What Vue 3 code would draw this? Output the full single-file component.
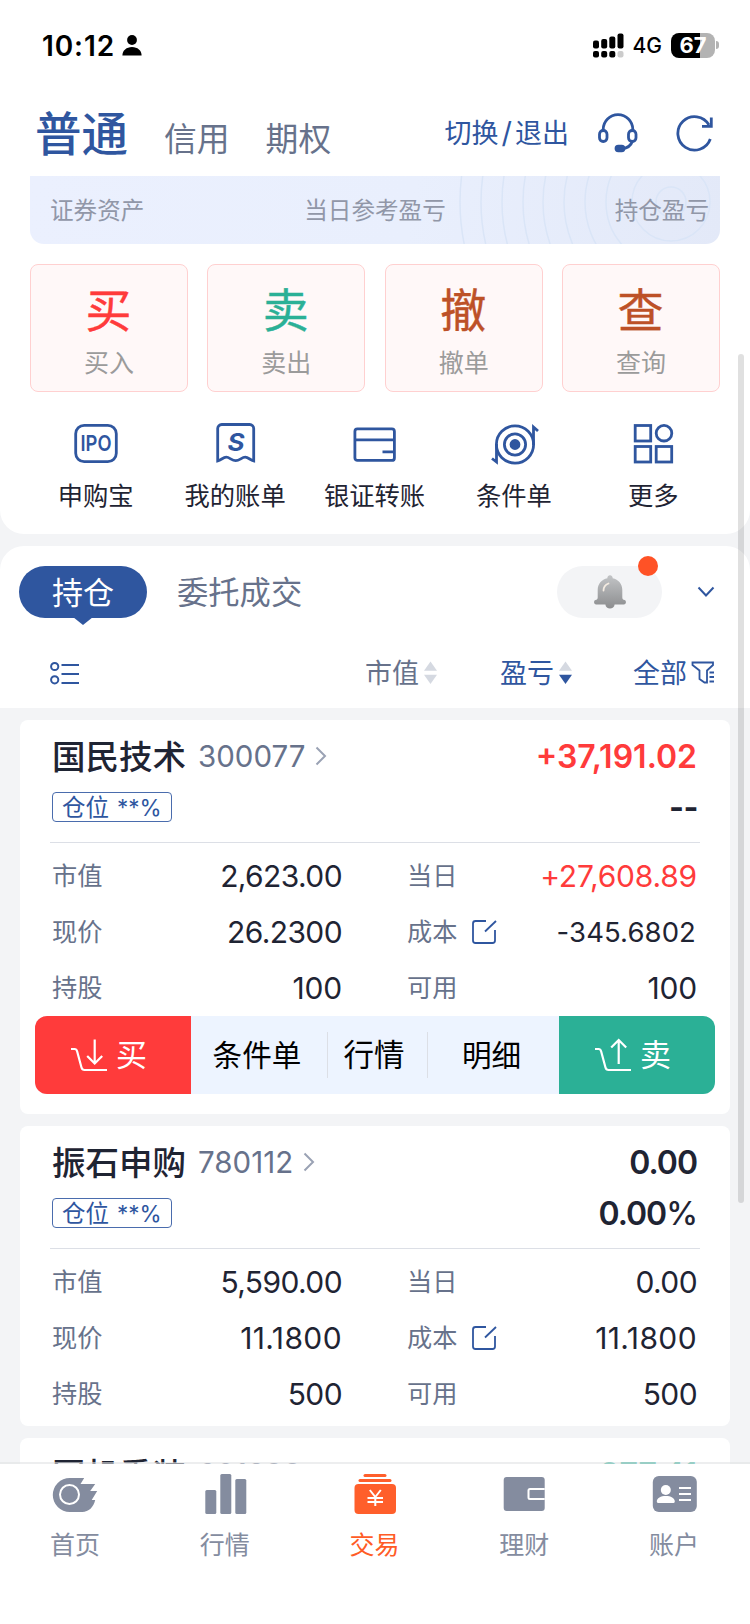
<!-- ./src/App.vue -->
<template>
    <div class="page">
        <!-- status bar -->
        <div class="status-bar">
            <div class="status-left">
                <span class="clock">10:12</span>
                <svg class="person" viewBox="0 0 20 21">
                    <circle cx="10" cy="5" r="4.9" />
                    <path d="M.4 20.500C.4 15.500 4.500 12 10 12s9.600 3.500 9.600 8.500z" />
                </svg>
            </div>
            <div class="status-right">
                <svg class="signal" viewBox="0 0 31 25">
                    <rect x="0" y="7.500" width="6" height="8" rx="2" />
                    <rect x="8.200" y="6" width="6" height="9.500" rx="2" />
                    <rect x="16.300" y="3.500" width="6" height="12" rx="2" />
                    <rect x="24.500" y=".5" width="6" height="15" rx="2" />
                    <rect x="0" y="18" width="6" height="6.500" rx="2" />
                    <rect x="8.200" y="18" width="6" height="6.500" rx="2" />
                    <rect x="16.300" y="18" width="6" height="6.500" rx="2" />
                    <rect x="24.500" y="18" width="6" height="6.500" rx="2" fill="#ccc" />
                </svg>
                <span class="network">4G</span>
                <div class="battery">67</div>
                <span class="battery-tip"></span>
            </div>
        </div>

        <!-- account type tabs -->
        <header class="header">
            <span class="account active">普通</span>
            <span class="account">信用</span>
            <span class="account">期权</span>
            <span class="switch">切换<i>/</i>退出</span>
            <svg class="headset" viewBox="0 0 40 40">
                <path d="M5.200 18V16.500a14.800 14.800 0 0 1 29.600 0V18" />
                <rect x="1.500" y="17.500" width="7.500" height="11" rx="3.700" />
                <rect x="30.500" y="17.500" width="7.500" height="11" rx="3.700" />
                <path d="M34.500 28c-1.500 4.500-5 7.500-11 7.700" />
                <rect x="18" y="33.200" width="8" height="4.600" rx="2.300" fill="#2f569f" />
            </svg>
            <svg class="refresh" viewBox="0 0 40 40">
                <path d="M35.300 26A16.700 16.700 0 1 1 34 12" />
                <path d="M36.300 4.500V13.300H27" />
            </svg>
        </header>

        <main class="content">
            <section class="panel top-panel">
                <div class="assets">
                    <svg class="rings" viewBox="0 0 290 68">
                        <circle v-for="r in rings" :key="r" cx="241" cy="26" :r="r" />
                    </svg>
                    <span>证券资产</span>
                    <span>当日参考盈亏</span>
                    <span>持仓盈亏</span>
                </div>
                <div class="trades">
                    <div v-for="item in trades" :key="item.label" class="trade">
                        <b :class="item.tone">{{ item.mark }}</b>
                        <span>{{ item.label }}</span>
                    </div>
                </div>
                <div class="tools">
                    <div class="tool">
                        <svg viewBox="0 0 44 44">
                            <rect x="1.700" y="4.300" width="40.600" height="36.400" rx="8.500" />
                            <text x="22" y="30" class="ipo" textLength="31" lengthAdjust="spacingAndGlyphs">IPO</text>
                        </svg>
                        <span>申购宝</span>
                    </div>
                    <div class="tool">
                        <svg viewBox="0 0 44 44">
                            <path d="M4.700 40V7.500a4 4 0 0 1 4-4h28a4 4 0 0 1 4 4V40c-3.500-1-5.500-3.800-8.500-3.800-3.500 0-5.500 3.500-9.500 3.500s-6-3.500-9.500-3.500c-3 0-5 2.800-8.500 3.800z" />
                            <text x="23" y="30" class="bill" textLength="17" lengthAdjust="spacingAndGlyphs">S</text>
                        </svg>
                        <span>我的账单</span>
                    </div>
                    <div class="tool">
                        <svg viewBox="0 0 44 44">
                            <rect x="2.900" y="7.900" width="39.500" height="31.500" rx="2.500" />
                            <path d="M3 18.800h39M30.500 30.800H42" />
                        </svg>
                        <span>银证转账</span>
                    </div>
                    <div class="tool">
                        <svg viewBox="0 0 50 44">
                            <circle cx="26" cy="23.500" r="18.600" />
                            <circle cx="26" cy="23.500" r="10.600" />
                            <circle cx="26" cy="23.500" r="4" fill="#2f569f" />
                            <path d="M44.500 24V6l4.500 4M7.500 23V41L3 37.500" />
                        </svg>
                        <span>条件单</span>
                    </div>
                    <div class="tool">
                        <svg viewBox="0 0 44 44">
                            <rect x="4.200" y="4.500" width="15.500" height="15.500" />
                            <circle cx="33" cy="12.200" r="7.800" />
                            <rect x="4.200" y="25.500" width="15.500" height="15.500" />
                            <rect x="25.200" y="25.500" width="15.500" height="15.500" />
                        </svg>
                        <span>更多</span>
                    </div>
                </div>
            </section>

            <section class="panel list-panel">
                <div class="tabs">
                    <span class="tab-active">持仓</span>
                    <span class="tab">委托成交</span>
                    <div class="notice">
                        <svg viewBox="0 0 32 34">
                            <defs>
                                <linearGradient id="bell" x1="0" y1="0" x2="0" y2="1">
                                    <stop offset="0" stop-color="#c2c4c6" />
                                    <stop offset="1" stop-color="#8c8d8f" />
                                </linearGradient>
                            </defs>
                            <path fill="url(#bell)" d="M16 .3a2.600 2.600 0 0 1 2.600 3C24.500 4.500 28.300 9 28.300 15v7.500c0 1.800.8 2.300 2.200 2.600 2.200.7 1.800 4.400-.7 4.400h-9.200c-.3 5.400-8.900 5.400-9.200 0H2.200c-2.500 0-2.900-3.700-.7-4.400 1.400-.3 2.200-.8 2.200-2.600V15c0-6 3.800-10.500 9.700-11.700a2.600 2.600 0 0 1 2.600-3z" />
                            <path d="M9.500 15.500c0-3.500 2-5.800 5-7" fill="none" stroke="#f4ece2" stroke-width="1.800" stroke-linecap="round" />
                        </svg>
                        <i class="dot"></i>
                    </div>
                    <svg class="fold" viewBox="0 0 18 12"><path d="M1.500 1.500L9 9.500l7.500-8" /></svg>
                </div>
                <div class="filters">
                    <svg class="list-icon" viewBox="0 0 30 24">
                        <circle cx="4.700" cy="5.500" r="3.600" />
                        <circle cx="4.700" cy="18.800" r="3.600" />
                        <path d="M11.500 4H29M11.500 13H29M11.500 22H29" />
                    </svg>
                    <span class="filter sort-value">市值
                        <svg viewBox="0 0 13 24"><path d="M6.500 .5L13 9.700H0z" /><path d="M0 13.800h13L6.500 23z" /></svg>
                    </span>
                    <span class="filter sort-profit blue">盈亏
                        <svg viewBox="0 0 13 24"><path d="M6.500 .5L13 9.700H0z" /><path class="on" d="M0 13.800h13L6.500 23z" /></svg>
                    </span>
                    <span class="filter blue">全部
                        <svg class="funnel" viewBox="0 0 24 24">
                            <path d="M1.500 1.500h20.500v2.500l-6 5.500V21.500h-2.500l-5-3.500V9.500L1.500 4z" />
                            <path d="M18.500 11.500H23M18.500 16H23M18.500 20.500H23" />
                        </svg>
                    </span>
                </div>
            </section>

            <!-- positions -->
            <article v-for="stock in stocks" :key="stock.code" class="card">
                <div class="card-title">
                    <span class="name">{{ stock.name }}</span>
                    <span class="code">{{ stock.code }}</span>
                    <svg class="arrow" viewBox="0 0 12 20"><path d="M1.500 1.500L10 10l-8.500 8.500" /></svg>
                    <span class="profit" :class="[stock.tone, { tight: !stock.tone }]">{{ stock.profit }}</span>
                </div>
                <div v-if="stock.rate" class="card-sub">
                    <span class="tag">仓位<em>**%</em></span>
                    <span class="rate" :class="stock.percent ? 'tight' : 'dashes'">{{ stock.rate }}<i v-if="stock.percent">%</i></span>
                </div>
                <div v-if="stock.cells.length" class="cells">
                    <div v-for="cell in stock.cells" :key="cell.label" class="cell">
                        <span class="cell-label">{{ cell.label }}</span>
                        <svg v-if="cell.label === '成本'" class="edit" viewBox="0 0 26 26">
                            <path d="M15 2H4.500A2.500 2.500 0 0 0 2 4.500v17A2.500 2.500 0 0 0 4.500 24h17a2.500 2.500 0 0 0 2.500-2.500V11" />
                            <path d="M14 12.500L25 2" />
                        </svg>
                        <span class="cell-value" :class="[cell.tone, cell.size]">{{ cell.value }}</span>
                    </div>
                </div>
                <div v-if="stock.open" class="actions">
                    <div class="side buy">
                        <svg viewBox="0 0 38 34">
                            <path d="M1 11h3.500c1.500 0 2.200.8 2.600 2.200L11.500 29.500c.5 1.800 1.200 2.500 3 2.500H37" />
                            <path d="M24.700 1.500V25M17.200 18l7.500 7.500L32.200 18" />
                        </svg>
                        <span>买</span>
                    </div>
                    <span class="action first">条件单</span>
                    <span class="action second">行情</span>
                    <span class="action third">明细</span>
                    <div class="side sell">
                        <svg viewBox="0 0 38 34">
                            <path d="M1 11h3.500c1.500 0 2.200.8 2.600 2.200L11.500 29.500c.5 1.800 1.200 2.500 3 2.500H37" />
                            <path d="M24.700 26V2M17.200 9.500l7.500-7.500L32.200 9.500" />
                        </svg>
                        <span>卖</span>
                    </div>
                </div>
            </article>
        </main>

        <!-- bottom navigation -->
        <nav class="nav">
            <div class="nav-item">
                <svg viewBox="0 0 46 44">
                    <path d="M17.800 6H32.200l-3.700 6H43.200l-5 7h7l-5.500 9H43.200c-1.500 7-6.500 12-13 12H17.800a17 17 0 0 1 0-34z" />
                    <circle cx="17.500" cy="22.500" r="9.500" fill="none" stroke="#fff" stroke-width="2" />
                </svg>
                <span>首页</span>
            </div>
            <div class="nav-item">
                <svg viewBox="0 0 46 44">
                    <rect x="3.300" y="18" width="11" height="24" rx="1.500" />
                    <rect x="18.300" y="2" width="11" height="40" rx="1.500" />
                    <rect x="33.300" y="7" width="11" height="35" rx="1.500" />
                </svg>
                <span>行情</span>
            </div>
            <div class="nav-item current">
                <svg viewBox="0 0 46 44">
                    <rect x="12.500" y="2" width="23" height="3" rx="1.500" />
                    <rect x="7.500" y="7" width="33" height="3" rx="1.500" />
                    <rect x="3.500" y="12" width="41.500" height="30" rx="4" />
                    <path d="M18.800 18l5.500 7 5.500-7M16.500 26h15.500M16.500 30h15.500M24.300 25v9" fill="none" stroke="#fff" stroke-width="2" />
                </svg>
                <span>交易</span>
            </div>
            <div class="nav-item">
                <svg viewBox="0 0 46 44">
                    <rect x="2.700" y="5" width="41" height="34" rx="3" />
                    <path d="M43.700 17H29a1.500 1.500 0 0 0-1.500 1.500v7A1.500 1.500 0 0 0 29 27h14.700" fill="none" stroke="#fff" stroke-width="2" />
                </svg>
                <span>理财</span>
            </div>
            <div class="nav-item">
                <svg viewBox="0 0 46 44">
                    <rect x="1.800" y="4" width="44" height="36" rx="6" />
                    <circle cx="14.800" cy="18" r="5" fill="#fff" />
                    <path d="M5.800 29.500c0-3.500 4-5.500 9-5.500s9 2 9 5.500c0 1-1 1.500-2 1.500h-14c-1 0-2-.5-2-1.500z" fill="#fff" />
                    <path d="M28 16h12M28 22h12M28 28h12" stroke="#fff" stroke-width="2" />
                </svg>
                <span>账户</span>
            </div>
        </nav>

        <i class="scrollbar"></i>
    </div>
</template>

<script setup>
// radii of the rings behind the asset summary
const rings = [15, 39, 65, 86, 107, 128, 148, 169, 190, 211];

// main trade entries
const trades = [
    { mark: '买', label: '买入', tone: 'red' },
    { mark: '卖', label: '卖出', tone: 'green' },
    { mark: '撤', label: '撤单', tone: 'brown' },
    { mark: '查', label: '查询', tone: 'brown' },
];

// positions, the open one shows its action bar
const stocks = [
    {
        name: '国民技术',
        code: '300077',
        profit: '+37,191.02',
        rate: '--',
        tone: 'red',
        open: true,
        cells: [
            { label: '市值', value: '2,623.00' },
            { label: '当日', value: '+27,608.89', tone: 'red', size: 'normal' },
            { label: '现价', value: '26.2300' },
            { label: '成本', value: '-345.6802', size: 'small' },
            { label: '持股', value: '100', size: 'normal' },
            { label: '可用', value: '100', size: 'normal' },
        ],
    },
    {
        name: '振石申购',
        code: '780112',
        profit: '0.00',
        rate: '0.00',
        percent: true,
        cells: [
            { label: '市值', value: '5,590.00' },
            { label: '当日', value: '0.00' },
            { label: '现价', value: '11.1800', size: 'wide' },
            { label: '成本', value: '11.1800', size: 'wide' },
            { label: '持股', value: '500' },
            { label: '可用', value: '500' },
        ],
    },
    {
        name: '国机重装',
        code: '601399',
        profit: '-277.41',
        tone: 'green',
        cells: [],
    },
];
</script>

<style>
body {
    background: #f3f4f6;
}
</style>

<style scoped>
.page {
    position: relative;
    display: flex;
    flex-direction: column;
    width: 750px;
    height: 1624px;
    overflow: hidden;
    background: #fff;
    color: #1f2433;
    font-family: Inter, "Noto Sans CJK SC", sans-serif;
}

svg {
    display: block;
    flex: none;
}

i,
em {
    font-style: normal;
}

.status-bar {
    display: flex;
    flex: none;
    justify-content: space-between;
    height: 90px;
    padding: 0 31px 0 42px;
    color: #000;
}

.status-left,
.status-right {
    display: flex;
    align-items: center;
    height: 90px;
}

.clock {
    padding-top: 1px;
    font-size: 28px;
    font-weight: 600;
    letter-spacing: 0.900px;
    line-height: 32px;
}

.person {
    width: 20px;
    height: 21px;
    margin-left: 7px;
}

.signal {
    width: 31px;
    height: 25px;
}

.network {
    margin-left: 9px;
    padding-top: 1px;
    font-size: 21px;
    font-weight: 500;
    line-height: 26px;
}

.battery {
    width: 44px;
    height: 25px;
    margin-left: 9px;
    border-radius: 8px;
    background: linear-gradient(90deg, #000 66%, #b3b3b3 66%);
    color: #fff;
    font-size: 22px;
    font-weight: 700;
    line-height: 25px;
    text-align: center;
}

.battery-tip {
    width: 3px;
    height: 8px;
    margin-left: 1px;
    border-radius: 0 3px 3px 0;
    background: #b3b3b3;
}

.header {
    display: flex;
    flex: none;
    align-items: center;
    height: 86px;
    padding: 0 35px 0 35px;
}

.account {
    margin-right: 36px;
    padding-top: 11px;
    color: #67728b;
    font-size: 32.800px;
    line-height: 40px;
}

.account.active {
    padding-top: 1px;
    color: #2f569f;
    font-size: 46.500px;
    font-weight: 500;
    line-height: 56px;
}

.switch {
    margin-left: auto;
    color: #2f569f;
    font-size: 27px;
    line-height: 36px;
}

.switch i {
    margin: 0 3px;
    font-size: 29px;
}

.headset {
    width: 40px;
    height: 40px;
    margin-left: 29px;
    fill: none;
    stroke: #2f569f;
    stroke-width: 2.800;
}

.refresh {
    width: 40px;
    height: 40px;
    margin-left: 37px;
    fill: none;
    stroke: #2f569f;
    stroke-width: 2.800;
}

.content {
    flex: 1;
    min-height: 0;
    overflow: hidden;
    background: #f3f4f6;
}

.panel {
    background: #fff;
}

.top-panel {
    height: 358px;
    padding: 0 30px;
    border-radius: 0 0 24px 24px;
}

.assets {
    position: relative;
    display: grid;
    grid-template-columns: 1fr auto 1fr;
    height: 68px;
    padding-top: 17px;
    overflow: hidden;
    border-radius: 0 0 14px 14px;
    background: linear-gradient(100deg, #ebf0fe, #e9effd 55%, #e3e9f8);
    color: #9197a8;
    font-size: 23.600px;
    line-height: 36px;
    box-sizing: border-box;
}

.assets span {
    position: relative;
    padding: 0 11px 0 20px;
}

.assets span:nth-of-type(2) {
    padding: 0;
}

.assets span:last-child {
    text-align: right;
}

.rings {
    position: absolute;
    top: 0;
    right: 0;
    width: 290px;
    height: 68px;
    fill: none;
    stroke: #dae5f7;
    stroke-width: 1.500;
}

.trades {
    display: grid;
    grid-template-columns: repeat(4, 158px);
    justify-content: space-between;
    margin-top: 20px;
}

.trade {
    display: flex;
    flex-direction: column;
    align-items: center;
    height: 128px;
    padding-top: 18px;
    border: 1px solid #ffd0d0;
    border-radius: 8px;
    background: #fff8f8;
    box-sizing: border-box;
}

.trade b {
    margin-right: 1px;
    font-size: 46px;
    font-weight: 400;
    line-height: 54px;
    -webkit-text-stroke: 0.400px currentColor;
}

.trade span {
    margin-top: 8px;
    color: #9b9b9b;
    font-size: 25px;
    line-height: 36px;
}

.red {
    color: #ff3b3b;
}

.green {
    color: #2bb096;
}

.brown {
    color: #bd5127;
}

.tools {
    display: grid;
    grid-template-columns: repeat(5, 139.400px);
    margin: 29px -4px 0;
}

.tool {
    display: flex;
    flex-direction: column;
    align-items: center;
    color: #1f2433;
    font-size: 25.300px;
    line-height: 36px;
}

.tool svg {
    height: 44px;
    margin-bottom: 13px;
    fill: none;
    stroke: #2f569f;
    stroke-width: 2.800;
}

.tool text {
    fill: #2f569f;
    stroke: none;
    text-anchor: middle;
}

.ipo {
    font-size: 22px;
    font-weight: 600;
}

.bill {
    font-size: 24px;
    font-style: italic;
    font-weight: 700;
}

.list-panel {
    height: 162px;
    margin-top: 12px;
    padding: 20px 35px 0 19px;
    border-radius: 24px 24px 0 0;
    box-sizing: border-box;
}

.tabs {
    display: flex;
    align-items: center;
    height: 52px;
}

.tab-active {
    position: relative;
    width: 128px;
    height: 52px;
    border-radius: 26px;
    background: #2f569f;
    color: #fff;
    font-size: 31px;
    line-height: 53px;
    text-align: center;
}

.tab-active::after {
    position: absolute;
    bottom: -7px;
    left: 54px;
    border: solid transparent;
    border-width: 8px 10px 0;
    border-top-color: #2f569f;
    content: "";
}

.tab {
    margin-left: 30px;
    padding-top: 2px;
    color: #67728b;
    font-size: 31.300px;
    line-height: 50px;
}

.notice {
    position: relative;
    width: 105px;
    height: 52px;
    margin-left: auto;
    border-radius: 26px;
    background: #f3f4f6;
}

.notice svg {
    width: 32px;
    height: 34px;
    margin: 9px auto 0;
}

.dot {
    position: absolute;
    top: -10px;
    right: 4px;
    width: 20px;
    height: 20px;
    border-radius: 50%;
    background: #ff5226;
}

.fold {
    width: 18px;
    height: 12px;
    margin-left: 35px;
    fill: none;
    stroke: #2f569f;
    stroke-width: 2;
}

.filters {
    display: flex;
    align-items: center;
    height: 38px;
    margin-top: 36px;
    padding-left: 31px;
}

.list-icon {
    width: 30px;
    height: 24px;
    margin-right: auto;
    fill: none;
    stroke: #2f569f;
    stroke-width: 2;
}

.filter {
    display: flex;
    align-items: center;
    padding-top: 2px;
    color: #67728b;
    font-size: 27px;
    line-height: 38px;
}

.filter svg {
    width: 13px;
    height: 24px;
    margin: -2px 0 0 5px;
    fill: #d5d9e1;
}

.filter .on {
    fill: #2f569f;
}

.filter .funnel {
    width: 24px;
    margin-left: 4px;
    fill: none;
    stroke: #2f569f;
    stroke-width: 1.800;
}

.blue {
    color: #2f569f;
}

.sort-value {
    margin-right: 63px;
}

.sort-profit {
    margin-right: 61px;
}

.card {
    margin: 12px 20px 0;
    padding-top: 16px;
    overflow: hidden;
    border-radius: 8px;
    background: #fff;
}

.card-title {
    display: flex;
    align-items: center;
    height: 40px;
    padding: 0 33px 0 32px;
}

.name {
    padding-top: 2px;
    font-size: 33.500px;
    font-weight: 500;
    line-height: 40px;
}

.code {
    margin-left: 12px;
    color: #67728b;
    font-size: 29.500px;
    line-height: 40px;
}

.arrow {
    width: 12px;
    height: 20px;
    margin-left: 10px;
    fill: none;
    stroke: #9aa2b4;
    stroke-width: 2;
}

.profit {
    margin-left: auto;
    padding-top: 1px;
    font-size: 32px;
    font-weight: 600;
    line-height: 40px;
}

.tight {
    letter-spacing: -1px;
}

.card-sub {
    display: flex;
    align-items: center;
    justify-content: space-between;
    height: 30px;
    margin-top: 16px;
    padding: 0 33px 0 32px;
}

.tag {
    width: 120px;
    height: 30px;
    padding-left: 9px;
    border: 1px solid #4a6cad;
    border-radius: 4px;
    color: #2f569f;
    font-size: 23.500px;
    line-height: 30px;
    box-sizing: border-box;
}

.tag em {
    margin-left: 8px;
    font-size: 22.500px;
}

.rate {
    padding-top: 2px;
    font-size: 32px;
    font-weight: 600;
    line-height: 30px;
}

.rate.dashes {
    margin-right: -1px;
    font-weight: 700;
    letter-spacing: -0.500px;
}

.rate i {
    font-weight: 500;
}

.cells {
    display: grid;
    grid-template-columns: 290px 290px;
    column-gap: 65px;
    margin: 20px 30px 0;
    padding: 5px 3px 4px 2px;
    border-top: 1px solid #dcdfe6;
}

.cell {
    display: flex;
    align-items: center;
    height: 56px;
}

.cell-label {
    padding-top: 1px;
    color: #67728b;
    font-size: 25.200px;
    line-height: 55px;
}

.edit {
    width: 26px;
    height: 26px;
    margin-left: 14px;
    fill: none;
    stroke: #2f569f;
    stroke-width: 1.800;
}

.cell-value {
    margin-left: auto;
    padding-top: 1px;
    font-size: 30px;
    letter-spacing: -0.600px;
    line-height: 55px;
}

.cell-value.normal {
    letter-spacing: -0.200px;
}

.cell-value.wide {
    letter-spacing: 0.400px;
}

.cell-value.small {
    margin-right: 1px;
    font-size: 27.500px;
    letter-spacing: 0.100px;
}

.actions {
    position: relative;
    display: flex;
    height: 78px;
    margin: -4px 15px 20px;
    overflow: hidden;
    border-radius: 12px;
    background: #edf4ff;
}

.side {
    display: flex;
    align-items: center;
    width: 156px;
    padding-left: 35px;
    background: #ff3b3b;
    color: #fff;
    font-size: 31px;
    line-height: 78px;
    box-sizing: border-box;
}

.side.sell {
    background: #2bb096;
}

.side svg {
    width: 38px;
    height: 34px;
    margin-right: 8px;
    fill: none;
    stroke: #fff;
    stroke-width: 2.200;
}

.action {
    display: flex;
    align-items: center;
    justify-content: center;
    height: 46px;
    margin-top: 16px;
    color: #000;
    font-size: 29.600px;
    line-height: 46px;
    box-sizing: border-box;
}

.first {
    width: 137px;
    padding-right: 4px;
    border-right: 1px solid #dcdfe6;
    white-space: nowrap;
}

.second {
    width: 100px;
    padding-right: 7px;
    border-right: 1px solid #dcdfe6;
    font-size: 30.500px;
}

.third {
    width: 131px;
    padding-right: 4px;
}

.nav {
    position: relative;
    display: grid;
    flex: none;
    grid-template-columns: repeat(5, 149.800px);
    height: 162px;
    margin-top: -2px;
    border-top: 2px solid rgba(225, 226, 229, 0.6);
    background: #fff;
    background-clip: padding-box;
    box-sizing: border-box;
}

.nav-item {
    display: flex;
    flex-direction: column;
    align-items: center;
    padding-top: 8px;
    color: #848c9f;
    font-size: 25px;
    line-height: 36px;
}

.nav-item svg {
    width: 46px;
    height: 44px;
    margin-bottom: 11px;
    fill: #848c9f;
}

.nav-item.current {
    color: #ff5c26;
}

.nav-item.current svg {
    fill: #ff5f2b;
}

/* scroll thumb floating over the content */
.scrollbar {
    position: absolute;
    top: 354px;
    right: 6px;
    width: 6px;
    height: 849px;
    border-radius: 3px;
    background: rgba(0, 0, 0, 0.12);
}
</style>
